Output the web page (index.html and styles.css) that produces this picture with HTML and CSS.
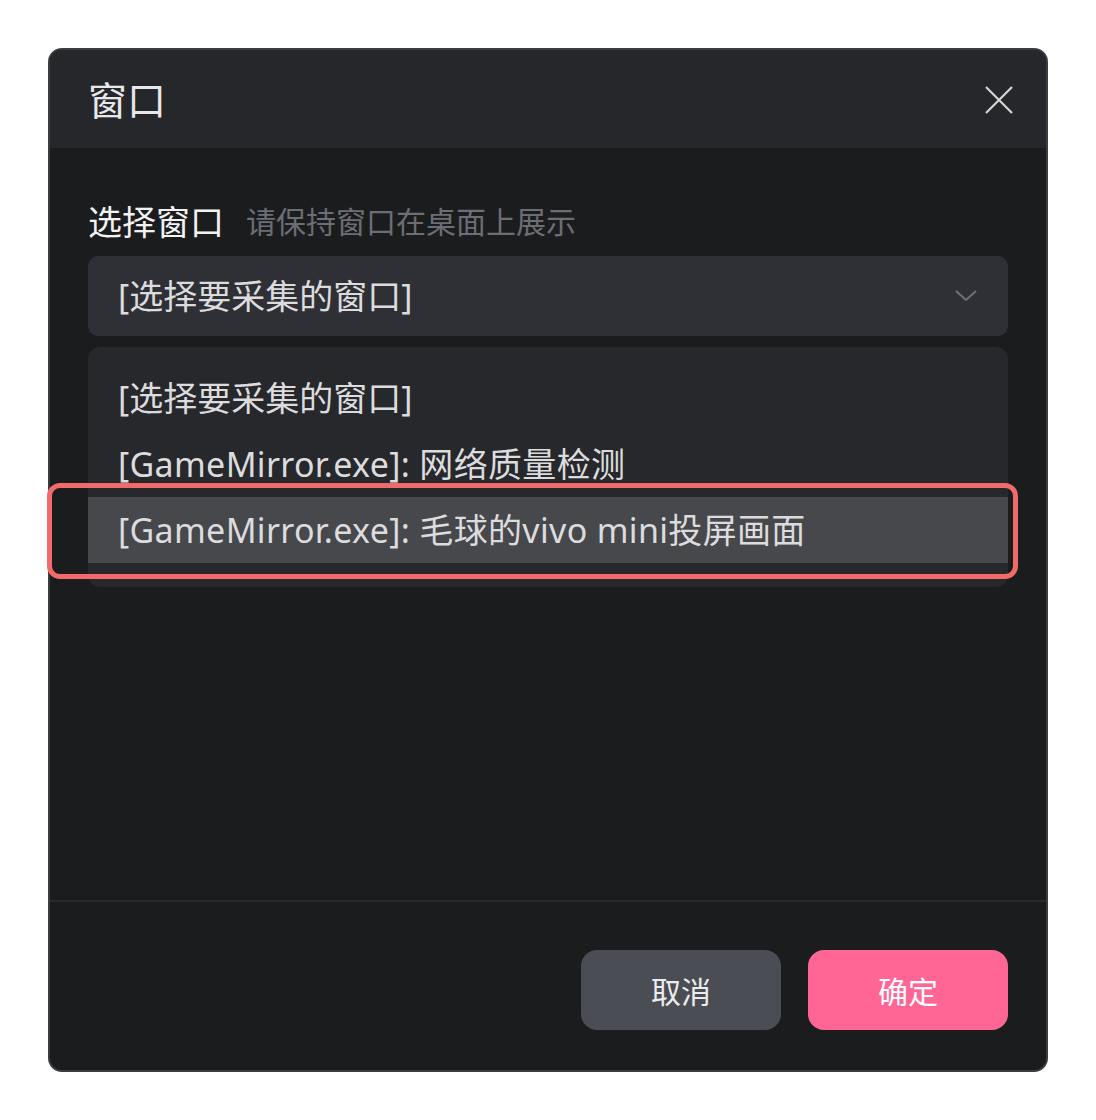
FILE: index.html
```html
<!DOCTYPE html>
<html lang="zh-CN">
<head>
<meta charset="utf-8">
<title>窗口</title>
<link rel="stylesheet" href="styles.css">
</head>
<body>
<div class="dialog">
  <div class="header">
    <span class="title">窗口</span>
    <svg class="close" width="30" height="30" viewBox="0 0 30 30"><path d="M2 2 L28 28 M28 2 L2 28" stroke="#d4d4d6" stroke-width="2.2" fill="none"/></svg>
  </div>
  <div class="body">
    <div class="label-row">
      <span class="label">选择窗口</span>
      <span class="hint">请保持窗口在桌面上展示</span>
    </div>
    <div class="select">
      <span class="select-text">[选择要采集的窗口]</span>
      <svg class="chevron" width="24" height="14" viewBox="0 0 24 14"><path d="M2 2 L12 11 L22 2" stroke="#6c737c" stroke-width="2" fill="none"/></svg>
    </div>
    <div class="dropdown">
      <div class="item">[选择要采集的窗口]</div>
      <div class="item latin">[GameMirror.exe]: 网络质量检测</div>
      <div class="item latin active">[GameMirror.exe]: 毛球的vivo mini投屏画面</div>
      <div class="mark"></div>
    </div>
  </div>
  <div class="footer">
    <button class="btn cancel">取消</button>
    <button class="btn ok">确定</button>
  </div>
</div>
</body>
</html>
```
FILE: styles.css
```css
* { box-sizing: border-box; }
html, body { margin: 0; padding: 0; background: #ffffff; }
body {
  padding: 48px 0 0 48px;
  font-family: "Noto Sans", "Noto Sans CJK SC", sans-serif;
}
.dialog {
  width: 1000px;
  height: 1024px;
  border: 2px solid #3d3d40;
  border-radius: 14px;
  background: #1b1c1e;
  display: flex;
  flex-direction: column;
}
.header {
  height: 98px;
  background: #26272a;
  border-radius: 12px 12px 0 0;
  display: flex;
  align-items: center;
  justify-content: space-between;
  padding: 0 32px 0 38px;
}
.title {
  font-size: 39px;
  color: #e8e8ea;
  line-height: 46px;
  margin-top: 2px;
}
.close { display: block; margin-top: 2px; }
.body {
  flex: 1;
  padding: 54px 38px 0 38px;
}
.label-row {
  display: flex;
  align-items: center;
  gap: 22px;
  height: 40px;
  line-height: 40px;
}
.label {
  font-size: 34px;
  color: #f2f2f4;
}
.hint {
  font-size: 30px;
  color: #6b6e74;
}
.select {
  margin-top: 14px;
  height: 80px;
  background: #2f3035;
  border-radius: 10px;
  display: flex;
  align-items: center;
  justify-content: space-between;
  padding: 0 30px 0 30px;
}
.select-text {
  font-size: 34px;
  color: #dcdcde;
  line-height: 44px;
}
.chevron { display: block; }
.dropdown {
  position: relative;
  margin-top: 11px;
  height: 240px;
  background: #27282b;
  border-radius: 12px;
  padding-top: 18px;
}
.item {
  height: 66px;
  display: flex;
  align-items: center;
  padding-left: 30px;
  font-size: 34px;
  line-height: 44px;
  color: #dcdcde;
}
.item.latin {
  letter-spacing: 0.33px;
}
.item.active {
  background: #47484c;
}
.mark {
  position: absolute;
  left: -41px;
  top: 136px;
  width: 971px;
  height: 96px;
  border: 5px solid #f26a6a;
  border-radius: 13px;
}
.footer {
  height: 170px;
  border-top: 2px solid #2a2b2e;
  display: flex;
  justify-content: flex-end;
  align-items: flex-start;
  gap: 27px;
  padding: 48px 38px 0 0;
}
.btn {
  width: 200px;
  height: 80px;
  border: none;
  border-radius: 16px;
  font-family: "Noto Sans CJK SC", sans-serif;
  font-size: 30px;
  color: #ffffff;
}
.cancel { background: #4a4d53; color: #ececee; }
.ok { background: #ff6696; }
```
